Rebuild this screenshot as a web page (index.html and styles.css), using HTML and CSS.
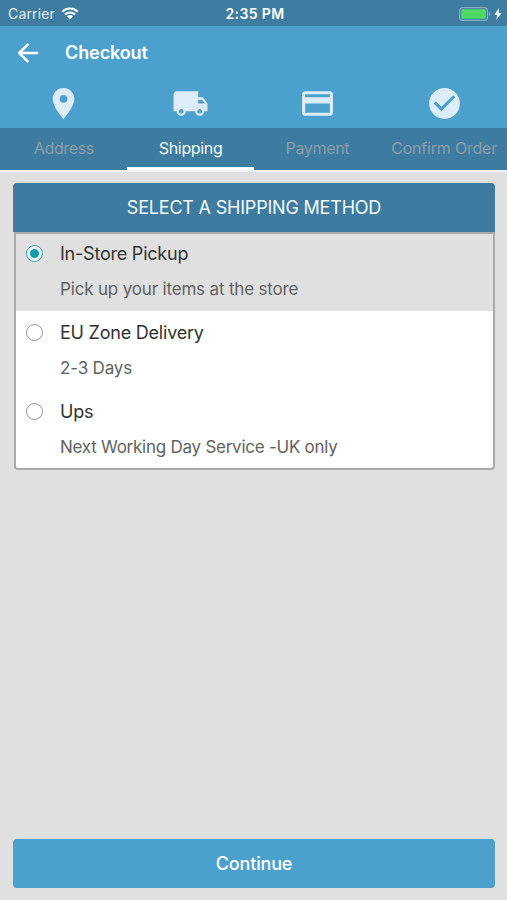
FILE: index.html
```html
<!DOCTYPE html>
<html lang="en">
<head>
<meta charset="utf-8">
<title>Checkout</title>
<link rel="stylesheet" href="styles.css">
</head>
<body>
<div class="screen">
  <div class="status">
    <div class="carrier">
      <span>Carrier</span>
      <svg class="wifi" viewBox="0 0 18 13"><path d="M1.3 4.7a11 11 0 0 1 15.4 0M4 7.5a7.1 7.1 0 0 1 10 0" fill="none" stroke="#fff" stroke-width="2.1"/><path d="M5.9 9.3a4.4 4.4 0 0 1 6.2 0L9 12.5z" fill="#fff"/></svg>
    </div>
    <span class="time">2:35 PM</span>
    <div class="power">
      <svg class="battery" viewBox="0 0 32 14"><rect x=".6" y=".6" width="27.8" height="12.8" rx="3" fill="none" stroke="#86adc6" stroke-width="1.2"/><rect x="2.2" y="2.2" width="24.6" height="9.6" rx="1.2" fill="#4cd964"/><path d="M29.8 4.8q1.7.6 1.7 2.2t-1.7 2.2z" fill="#86adc6"/></svg>
      <svg class="bolt" viewBox="0 0 8 12"><path d="M5 0 .5 6.8h2.8L2.2 12l5.3-7H4.6z" fill="#fff"/></svg>
    </div>
  </div>
  <header class="bar">
    <svg class="back" viewBox="0 0 22 20"><path d="M20 10H2.2M10.600 1.700 2.200 10l8.400 8.300" fill="none" stroke="#fff" stroke-width="2.6" stroke-linecap="round" stroke-linejoin="round"/></svg>
    <h1>Checkout</h1>
  </header>
  <nav class="tabs">
    <div class="tab">
      <div class="tab-icon"><svg viewBox="0 0 24 24"><path d="M12 2C8.130 2 5 5.130 5 9c0 5.250 7 13 7 13s7-7.750 7-13c0-3.870-3.130-7-7-7zm0 9.500a2.500 2.500 0 0 1 0-5 2.500 2.500 0 0 1 0 5z"/></svg></div>
      <div class="tab-label"><span>Address</span></div>
    </div>
    <div class="tab active">
      <div class="tab-icon"><svg viewBox="0 0 24 24"><path d="M20 8h-3V4H3c-1.100 0-2 .9-2 2v11h2c0 1.660 1.340 3 3 3s3-1.340 3-3h6c0 1.660 1.340 3 3 3s3-1.340 3-3h2v-5l-3-4zM6 18.500c-.83 0-1.500-.67-1.500-1.500s.67-1.500 1.500-1.500 1.500.67 1.500 1.500-.67 1.500-1.500 1.500zm13.500-9 1.960 2.500H17V9.500h2.500zm-1.500 9c-.83 0-1.500-.67-1.500-1.500s.67-1.500 1.500-1.500 1.500.67 1.500 1.500-.67 1.500-1.500 1.500z"/></svg></div>
      <div class="tab-label"><span>Shipping</span></div>
    </div>
    <div class="tab">
      <div class="tab-icon"><svg viewBox="0 0 24 24"><path d="M20 4H4c-1.110 0-1.990.89-1.990 2L2 18c0 1.110.89 2 2 2h16c1.110 0 2-.89 2-2V6c0-1.110-.89-2-2-2zm0 14H4v-6h16v6zm0-10H4V6h16v2z"/></svg></div>
      <div class="tab-label"><span>Payment</span></div>
    </div>
    <div class="tab">
      <div class="tab-icon"><svg viewBox="0 0 24 24"><path d="M12 2C6.480 2 2 6.480 2 12s4.480 10 10 10 10-4.480 10-10S17.520 2 12 2zm-2 15-5-5 1.410-1.410L10 14.170l7.590-7.590L19 8l-9 9z"/></svg></div>
      <div class="tab-label long"><span>Confirm Order</span></div>
    </div>
  </nav>
  <main class="content">
    <section class="card">
      <h2><span>SELECT A SHIPPING METHOD</span></h2>
      <div class="methods">
        <div class="method selected">
          <span class="radio"></span>
          <div class="text"><p class="name">In-Store Pickup</p><p class="note">Pick up your items at the store</p></div>
        </div>
        <div class="method">
          <span class="radio"></span>
          <div class="text"><p class="name">EU Zone Delivery</p><p class="note">2-3 Days</p></div>
        </div>
        <div class="method">
          <span class="radio"></span>
          <div class="text"><p class="name">Ups</p><p class="note tight">Next Working Day Service -UK only</p></div>
        </div>
      </div>
    </section>
    <button class="continue">Continue</button>
  </main>
</div>
</body>
</html>
```
FILE: styles.css
```css
* { box-sizing: border-box; }
body, h1, h2, p { margin: 0; }
body { font-family: Inter, "Liberation Sans", sans-serif; background: #e0e0e0; }
svg { display: block; flex: none; }
.screen { width: 507px; height: 900px; display: flex; flex-direction: column; overflow: hidden; }

.status {
  height: 26px; flex: none; display: grid; grid-template-columns: 1fr auto 1fr;
  align-items: center; padding: 1px 5px 0 8px; background: #3f7ca1; color: #fff;
}
.carrier { display: flex; align-items: center; gap: 6px; font-size: 14px; letter-spacing: .15px; color: #e3edf3; }
.wifi { width: 18px; height: 13px; }
.time { font-size: 14px; font-weight: 600; letter-spacing: .4px; }
.power { display: flex; align-items: center; justify-content: flex-end; gap: 3px; }
.battery { width: 32px; height: 14px; }
.bolt { width: 8px; height: 12px; }

.bar { height: 53px; flex: none; display: flex; align-items: center; gap: 26px; padding-left: 17px; background: #4ca0cd; color: #fff; }
.back { width: 22px; height: 20px; }
.bar h1 { font-size: 18px; line-height: 24px; font-weight: 600; letter-spacing: -.1px; }

.tabs { height: 93px; flex: none; display: grid; grid-template-columns: repeat(4, 1fr); background: #4ca0cd; border-bottom: 2px solid #eef1f4; }
.tab-icon { height: 49px; display: flex; align-items: center; justify-content: center; padding-left: 1px; }
.tab-icon svg { width: 37px; height: 37px; fill: #dcedf7; }
.tab-label {
  height: 42px; display: flex; align-items: center; justify-content: center; padding-left: 1px;
  background: #3e7ba0; border-bottom: 3px solid #3e7ba0; color: #8b9ea9; font-size: 16px; letter-spacing: -.35px; white-space: nowrap;
}
.tab-label.long { letter-spacing: -.2px; }
.active .tab-label { color: #f2f8fb; border-color: #fff; }

.content { flex: 1; display: flex; flex-direction: column; justify-content: space-between; padding: 11px 12px 12px 13px; }
.card h2 {
  height: 49px; display: flex; align-items: center; justify-content: center;
  background: #3d7ba0; border-radius: 4px 4px 0 0; color: #f5fafc; font-size: 18px; font-weight: 400; letter-spacing: -.2px; white-space: nowrap;
}
.methods { background: #fff; border: 2px solid #a9a9a9; border-radius: 0 0 4px 4px; height: 238px; margin-left: 1px; }
.method { height: 79px; display: flex; padding: 0 10px; gap: 17px; }
.method.selected { background: #e0e0e0; height: 77px; }
.method.selected .radio { margin-top: 11px; border-color: #38a3b0; background: radial-gradient(circle, #0e9aa8 0 4px, #eaf3f4 4.8px); }
.method.selected .text { padding-top: 8px; }
.radio { width: 17px; height: 17px; flex: none; margin-top: 13px; border: 1.500px solid #929292; border-radius: 50%; }
.text { padding-top: 10px; white-space: nowrap; }
.name { font-size: 18px; line-height: 24px; letter-spacing: -.22px; color: #303334; }
.note { font-size: 17px; line-height: 24px; letter-spacing: -.17px; margin-top: 11px; color: #626262; }
.note.tight { letter-spacing: -.25px; }
.continue {
  height: 49px; border: 0; border-radius: 4px; background: #4ca0cd; color: #fff;
  font: 500 18px/24px Inter, "Liberation Sans", sans-serif; letter-spacing: -.15px;
}
```
